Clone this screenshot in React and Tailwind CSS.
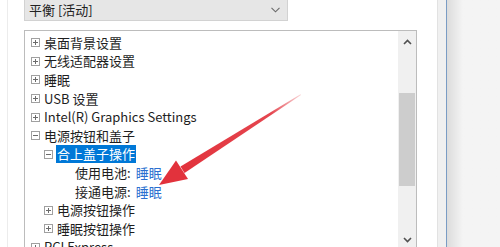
import React from 'react';

const font = { fontFamily: '"Noto Sans CJK SC", "Noto Sans", sans-serif' };

const Box = ({ open }) => (
  <svg width="9" height="9" viewBox="0 0 9 9" className="shrink-0">
    <rect x="0.5" y="0.5" width="8" height="8" fill="#fff" stroke="#a0a0a0" />
    <path d="M2 4.5h5" stroke="#6b6b6b" />
    {!open && <path d="M4.5 2v5" stroke="#6b6b6b" />}
  </svg>
);

const rows = [
  { level: 0, text: '桌面背景设置' },
  { level: 0, text: '无线适配器设置' },
  { level: 0, text: '睡眠' },
  { level: 0, text: 'USB 设置' },
  { level: 0, text: 'Intel(R) Graphics Settings' },
  { level: 0, text: '电源按钮和盖子', open: true },
  { level: 1, text: '合上盖子操作', open: true, selected: true },
  { level: 2, text: '使用电池:', value: '睡眠' },
  { level: 2, text: '接通电源:', value: '睡眠' },
  { level: 1, text: '电源按钮操作' },
  { level: 1, text: '睡眠按钮操作' },
  { level: 0, text: 'PCI Express' },
];

const indent = ['pl-[6px]', 'pl-[19px]', 'pl-[46px]'];

const TreeRow = ({ row }) => (
  <div className={`flex items-center h-[18.6px] ${indent[row.level]}`}>
    {row.level < 2 && <Box open={row.open} />}
    <span
      className={`ml-[3px] px-px leading-[18px] ${
        row.selected ? 'bg-[#0078d7] text-white' : 'text-[#1e1e1e]'
      }`}
    >
      {row.text}
    </span>
    {row.value && <span className="ml-[4px] text-[#2a6fd0]">{row.value}</span>}
  </div>
);

export default function App() {
  return (
    <div className="relative w-[500px] h-[247px] flex bg-white overflow-hidden text-[13px]" style={font}>
      <div className="w-[437px] shrink-0 flex">
        <div className="w-[7px] shrink-0" />
        <div className="w-[17px] shrink-0 border-l border-[#ececec]" />
        <div className="flex flex-col">
          <div className="w-[264px] h-[23px] bg-[#e6e6e6] border border-t-0 border-[#d2d2d2] flex items-center justify-between pl-[4px] pr-[7px] text-[#222]">
            <span>平衡 [活动]</span>
            <svg width="9" height="6" viewBox="0 0 9 6">
              <path d="M0.5 0.8l4 4 4-4" fill="none" stroke="#6a6a6a" strokeWidth="1.1" />
            </svg>
          </div>
          <div className="mt-[9px] w-[393px] h-[230px] border border-[#bcbcbc] flex">
            <div className="flex-1 pt-[3px]">
              {rows.map((r, i) => (
                <TreeRow key={i} row={r} />
              ))}
            </div>
            <div className="w-[18px] bg-[#f0f0f0] flex flex-col">
              <div className="h-[23px] flex items-center justify-center">
                <svg width="9" height="6" viewBox="0 0 9 6">
                  <path d="M1 5l3.5-3.5L8 5" fill="none" stroke="#505050" strokeWidth="1.6" />
                </svg>
              </div>
              <div className="mt-[39px] mx-[1px] h-[93px] bg-[#cdcdcd]" />
              <div className="flex-1" />
              <div className="h-[24px] flex items-start pt-[4px] justify-center">
                <svg width="9" height="6" viewBox="0 0 9 6">
                  <path d="M1 1l3.5 3.5L8 1" fill="none" stroke="#505050" strokeWidth="1.6" />
                </svg>
              </div>
            </div>
          </div>
        </div>
      </div>
      <div className="w-[9px] shrink-0 bg-[#f0f0f0] border-l border-[#e2e2e2]" />
      <div className="w-px shrink-0 bg-[#7a9cc4]" />
      <div className="flex-1 bg-gradient-to-r from-[#dcdcdc] to-[#f4f4f4] to-[30%]" />

      <svg className="absolute left-0 top-0 pointer-events-none" width="500" height="247">
        <defs>
          <linearGradient id="shaft" x1="301" y1="95" x2="182" y2="170" gradientUnits="userSpaceOnUse">
            <stop offset="0" stopColor="#e2323c" stopOpacity="0.2" />
            <stop offset="0.25" stopColor="#e2323c" stopOpacity="0.9" />
            <stop offset="1" stopColor="#e2323c" />
          </linearGradient>
        </defs>
        <polygon points="301,95 300.5,94.2 180.5,166.5 184.5,173" fill="url(#shaft)" />
        <polygon points="159,185 176,160.5 188,179" fill="#e2323c" />
      </svg>
    </div>
  );
}
